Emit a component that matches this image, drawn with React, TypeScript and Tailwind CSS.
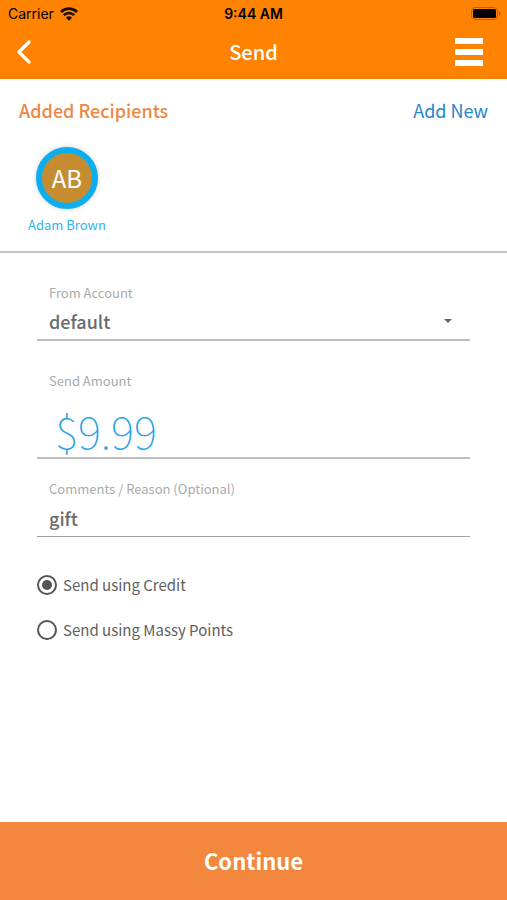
import { useState } from "react";

type Method = "credit" | "points";

const methods: { id: Method; label: string }[] = [
  { id: "credit", label: "Send using Credit" },
  { id: "points", label: "Send using Massy Points" },
];

function StatusBar() {
  return (
    <div className="grid grid-cols-3 items-center h-7 px-2 font-['Inter',sans-serif] text-black">
      <div className="flex items-center gap-1.5 text-sm">
        Carrier
        <svg width="18" height="14" viewBox="0 0 18 14" fill="none">
          <path d="M1 5a11.4 11.4 0 0 1 16 0" stroke="#1a0d00" strokeWidth="2.8" />
          <path d="M3.8 8.2a7.4 7.4 0 0 1 10.4 0" stroke="#1a0d00" strokeWidth="2.6" />
          <path d="M9 13.8 6 10.8a4.3 4.3 0 0 1 6 0z" fill="#1a0d00" />
        </svg>
      </div>
      <div className="text-sm font-semibold text-center">9:44 AM</div>
      <svg className="justify-self-end -mr-1" width="32" height="14" viewBox="0 0 32 14">
        <rect x="0.5" y="0.5" width="26" height="12" rx="3.5" fill="none" stroke="#b86000" />
        <rect x="2" y="2" width="23" height="9" rx="1.5" fill="#000" />
        <path d="M28 4.3v4.4q2-.6 2-2.2t-2-2.2z" fill="#b86000" />
      </svg>
    </div>
  );
}

function Header() {
  return (
    <header className="bg-[#ff8300]">
      <StatusBar />
      <div className="grid grid-cols-3 items-center h-[51px] px-4 pb-1">
        <button aria-label="Back" className="justify-self-start">
          <svg width="16" height="24" viewBox="0 0 16 24" fill="none">
            <path
              d="M13 2 3 12l10 10"
              stroke="#fff"
              strokeWidth="3.2"
              strokeLinecap="round"
              strokeLinejoin="round"
            />
          </svg>
        </button>
        <h1 className="text-xl leading-6 font-medium text-white text-center">Send</h1>
        <button aria-label="Menu" className="justify-self-end mr-2">
          <svg width="28" height="28" viewBox="0 0 28 28" fill="#fff">
            <rect y="0" width="28" height="6" />
            <rect y="11" width="28" height="6" />
            <rect y="22" width="28" height="6" />
          </svg>
        </button>
      </div>
    </header>
  );
}

function Recipients() {
  return (
    <section className="border-b-2 border-[#c4c4c4] pt-[19px] pb-4">
      <div className="flex items-center justify-between px-[19px] text-lg leading-6">
        <h2 className="font-medium text-[#ee8743]">Added Recipients</h2>
        <button className="text-[#2386cd]">Add New</button>
      </div>
      <div className="flex px-7 pt-[25px]">
        <div className="flex flex-col items-center gap-1.5">
          <div className="flex items-center justify-center size-[62px] rounded-full border-6 border-[#0daef0] bg-[#c58c30] text-2xl leading-6 text-white shadow-[0_0_5px_rgba(0,0,0,0.2)]">
            AB
          </div>
          <span className="text-[13px] leading-5 text-[#2fb4ee]">Adam Brown</span>
        </div>
      </div>
    </section>
  );
}

function App() {
  const [account, setAccount] = useState("default");
  const [amount, setAmount] = useState("$9.99");
  const [comment, setComment] = useState("gift");
  const [method, setMethod] = useState<Method>("credit");

  return (
    <div className="min-h-screen flex flex-col bg-white font-['Noto_Sans_CJK_SC','Noto_Sans',sans-serif]">
      <Header />
      <Recipients />

      <form className="flex flex-col px-[37px] pt-[30px]">
        <div className="flex flex-col border-b-2 border-[#bebebe]">
          <label htmlFor="account" className="px-3 text-[13px] leading-5 text-[#aaaaaa]">
            From Account
          </label>
          <div className="grid items-center">
            <select
              id="account"
              value={account}
              onChange={(e) => setAccount(e.target.value)}
              className="col-start-1 row-start-1 appearance-none h-9 px-3 text-lg leading-6 font-medium text-[#6b6b6b] outline-none"
            >
              <option value="default">default</option>
            </select>
            <svg
              className="col-start-1 row-start-1 justify-self-end mr-[18px] pointer-events-none"
              width="8"
              height="4"
              viewBox="0 0 8 4"
            >
              <path d="M0 0h8L4 4z" fill="#666" />
            </svg>
          </div>
        </div>

        <div className="flex flex-col mt-[30px] border-b-2 border-[#bebebe]">
          <label htmlFor="amount" className="px-3 text-[13px] leading-5 text-[#aaaaaa]">
            Send Amount
          </label>
          <input
            id="amount"
            value={amount}
            onChange={(e) => setAmount(e.target.value)}
            className="h-[66px] pt-3 px-[18px] text-[44px] leading-12 font-thin text-[#2ea3e6] outline-none"
          />
        </div>

        <div className="flex flex-col mt-5 border-b border-[#a0a0a0]">
          <label htmlFor="comment" className="px-3 text-[13px] leading-5 text-[#aaaaaa]">
            Comments / Reason (Optional)
          </label>
          <input
            id="comment"
            value={comment}
            onChange={(e) => setComment(e.target.value)}
            className="h-[37px] px-3 text-lg leading-6 font-medium text-[#6b6b6b] outline-none"
          />
        </div>

        <div className="flex flex-col gap-[25px] mt-[38px] mb-10">
          {methods.map((m) => (
            <label key={m.id} className="flex items-center gap-1.5 text-[15px] leading-5 text-[#606060]">
              <input
                type="radio"
                name="method"
                checked={method === m.id}
                onChange={() => setMethod(m.id)}
                className="appearance-none size-5 rounded-full border-2 border-[#555555] checked:bg-[#555555] checked:bg-clip-content checked:p-[3px]"
              />
              {m.label}
            </label>
          ))}
        </div>
      </form>

      <button className="mt-auto h-[78px] w-full pb-0.5 bg-[#f2873d] text-[22px] leading-8 font-bold text-white">
        Continue
      </button>
    </div>
  );
}

export default App;
